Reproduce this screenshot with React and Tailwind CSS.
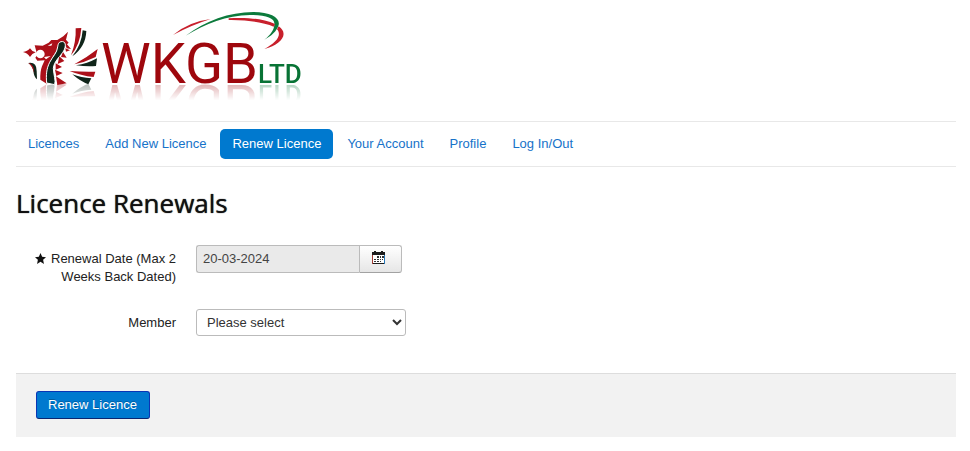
import React from "react";

const navItems = ["Licences", "Add New Licence", "Renew Licence", "Your Account", "Profile", "Log In/Out"];

function Logo() {
  return (
    <svg
      viewBox="16 10 290 74"
      role="img"
      aria-label="WKGB Ltd"
      className="block h-[74px] w-[290px] overflow-visible [-webkit-box-reflect:below_0px_linear-gradient(transparent_78%,rgba(0,0,0,0.3))]"
    >
      <g transform="translate(10 5) scale(0.33333)">
        <path fill="#ac1019" d="M39 141 Q52 140 60 130 Q64 138 77 142 Q66 146 60 156 Q53 144 39 141Z" />
        <path
          fill="#ac1019"
          d="M74 121 L98 122 L116 113 L124 105 L142 105 L160 94 L174 80 L168 104 L176 113 L171 118 L183 132 L170 130 L164 114 Q152 104 146 120 Q142 138 130 152 Q116 172 112 192 L110 236 L91 224 Q90 200 96 184 L104 166 L82 167 L76 158 L82 150 L78 136Z"
        />
        <circle cx="91" cy="147" r="13" fill="#fff" />
        <path fill="#fff" d="M113 122 L127 115 L124 122Z M102 156 L122 153 L108 163Z" />
        <path
          fill="#10251a"
          stroke="#fff"
          strokeWidth="3"
          d="M153 110 C168 107 169 123 161 138 C151 155 132 168 130 190 C131 211 138 226 134 239 L110 234 C108 210 109 192 119 172 C129 153 141 144 143 126 C144 116 147 111 153 110Z"
        />
        <path
          fill="#ac1019"
          d="M166 130 L180 136 L168 140Z M159 141 L170 158 L153 156Z M148 154 L163 168 L143 177Z M137 175 L156 186 L137 194Z M135 194 L158 204 L139 213Z M138 214 L170 235 L142 240Z"
        />
        <path fill="#10251a" d="M55 174 Q80 170 80 198 L81 223 Q72 216 70 197 Q68 182 55 174Z" />
        <path fill="#ac1019" d="M55 174 Q67 176 71 190 L73 206 Q68 184 55 174Z" />
        <path fill="#ac1019" d="M197 70 L214 69 Q211 118 183 151 Q199 110 197 70Z" />
        <path fill="#10251a" d="M218 76 L229 78 Q227 126 187 154 Q215 119 218 76Z" />
        <path fill="#ac1019" d="M193 178 Q230 158 263 132 L257 156 Q224 172 193 178Z" />
        <path fill="#10251a" d="M198 181 Q232 176 261 160 L258 183 Q230 185 198 181Z" />
        <path fill="#ac1019" d="M179 198 Q218 201 256 200 L251 216 Q212 212 179 198Z" />
        <path fill="#10251a" d="M187 208 Q214 219 244 220 L235 238 Q211 229 187 208Z" />
      </g>
      <g transform="translate(150 5) scale(0.33333)">
        <path fill="#c8202c" d="M69 90 Q116 50 182 42 Q122 61 69 90Z" />
        <path
          fill="#0c7a3c"
          d="M107 92 C166 48 238 21 310 21 C363 21 391 39 386 60 C381 78 363 94 343 104 C362 89 372 75 373 59 C376 40 350 30 300 30 C230 31 166 57 107 92Z"
        />
        <path
          fill="#c8202c"
          d="M236 40 C287 36 340 41 375 57 L371 65 C342 52 287 44 236 45Z M386 64 C418 86 395 118 343 132 C378 113 397 91 381 73Z"
        />
      </g>
      <text x="101" y="83" fill="#9e070d" className="font-['Roboto',sans-serif] text-[56px]">
        WKGB
      </text>
      <text x="258" y="83" fill="#087335" className="font-['Roboto',sans-serif] text-[26px] font-medium">
        LTD
      </text>
    </svg>
  );
}

function CalendarIcon() {
  return (
    <svg viewBox="0 0 13 13" className="h-[13px] w-[13px]" shapeRendering="crispEdges" aria-hidden="true">
      <path fill="#1c1c1c" d="M0 1h2V0h2v1h5V0h2v1h2v12H0z" />
      <path fill="#fff" d="M1 4h11v8H1z" />
      <path
        fill="#333"
        d="M5 5h2v2H5zM8 5h1v2H8zM10 5h2v2h-2zM2 8h2v1H2zM5 8h2v1H5zM8 8h1v1H8zM10 8h1v1h-1zM2 10h2v1H2zM5 10h2v1H5zM8 10h1v1H8z"
      />
      <path fill="#a13a32" d="M0 4h1v9H0z" />
      <path fill="#2878b8" d="M12 4h1v9h-1z" />
    </svg>
  );
}

export default function App() {
  return (
    <div className="bg-white pt-[10px] pr-[14px] pb-[14px] pl-4 font-['Liberation_Sans',Arial,sans-serif] text-[13px] leading-[18px] text-[#222]">
      <header className="pb-[37px]">
        <a href="#home" className="inline-block align-top">
          <Logo />
        </a>
      </header>

      <nav className="border-y border-[#e8e8e8] py-[7px]">
        <ul className="flex flex-wrap gap-[2px]">
          {navItems.map((item) => (
            <li key={item}>
              <a
                href="#nav"
                aria-current={item === "Renew Licence" ? "page" : undefined}
                className={
                  item === "Renew Licence"
                    ? "block rounded-[5px] bg-[#0079cf] px-3 py-[6px] text-white"
                    : "block px-3 py-[6px] text-[#1672c9]"
                }
              >
                {item}
              </a>
            </li>
          ))}
        </ul>
      </nav>

      <main>
        <h1 className="pt-[18px] font-['Open_Sans',sans-serif] text-[26px] leading-[36px] font-medium text-[#111] [text-shadow:0_0_1px_#111]">
          Licence Renewals
        </h1>
        <form onSubmit={(e) => e.preventDefault()}>
          <div className="flex items-start gap-5 pt-6">
            <label htmlFor="renewal-date" className="w-40 pt-[5px] text-right">
              <svg viewBox="0 0 24 24" className="mr-[5px] inline h-[11px] w-[11px] align-[-1px]" fill="#111" aria-hidden="true">
                <path d="M12 0l3.6 8.2 8.4.9-6.3 5.7L19.5 24 12 19.2 4.5 24l1.8-9.2L0 9.1l8.4-.9z" />
              </svg>
              Renewal Date (Max 2 Weeks Back Dated)
            </label>
            <div className="flex h-7">
              <input
                id="renewal-date"
                type="text"
                readOnly
                defaultValue="20-03-2024"
                className="w-[163px] rounded-l-[3px] border border-r-0 border-[#bbb] bg-[#eaeaea] px-[6px] text-[#444] outline-none"
              />
              <button
                type="button"
                aria-label="Choose date"
                className="flex w-[43px] items-center rounded-r-[3px] border border-[#bbb] border-b-[#a2a2a2] bg-linear-to-b from-white to-[#e6e6e6] pb-[3px] pl-3"
              >
                <CalendarIcon />
              </button>
            </div>
          </div>

          <div className="flex items-start gap-5 pt-[23px]">
            <label htmlFor="member" className="w-40 pt-[5px] text-right">
              Member
            </label>
            <select
              id="member"
              className="h-[27px] w-[210px] rounded-[3px] border border-[#bbb] bg-white px-[6px] text-[#333]"
            >
              <option>Please select</option>
            </select>
          </div>

          <div className="mt-[37px] border-t border-[#ddd] bg-[#f2f2f2] px-5 pt-[17px] pb-[18px]">
            <button
              type="submit"
              className="block h-7 rounded-[3px] border border-[#0a35b5] border-b-[#0a2570] bg-[#0079cf] pr-3 pl-[11px] text-white [text-shadow:0_-1px_0_rgba(0,0,0,0.25)]"
            >
              Renew Licence
            </button>
          </div>
        </form>
      </main>
    </div>
  );
}
